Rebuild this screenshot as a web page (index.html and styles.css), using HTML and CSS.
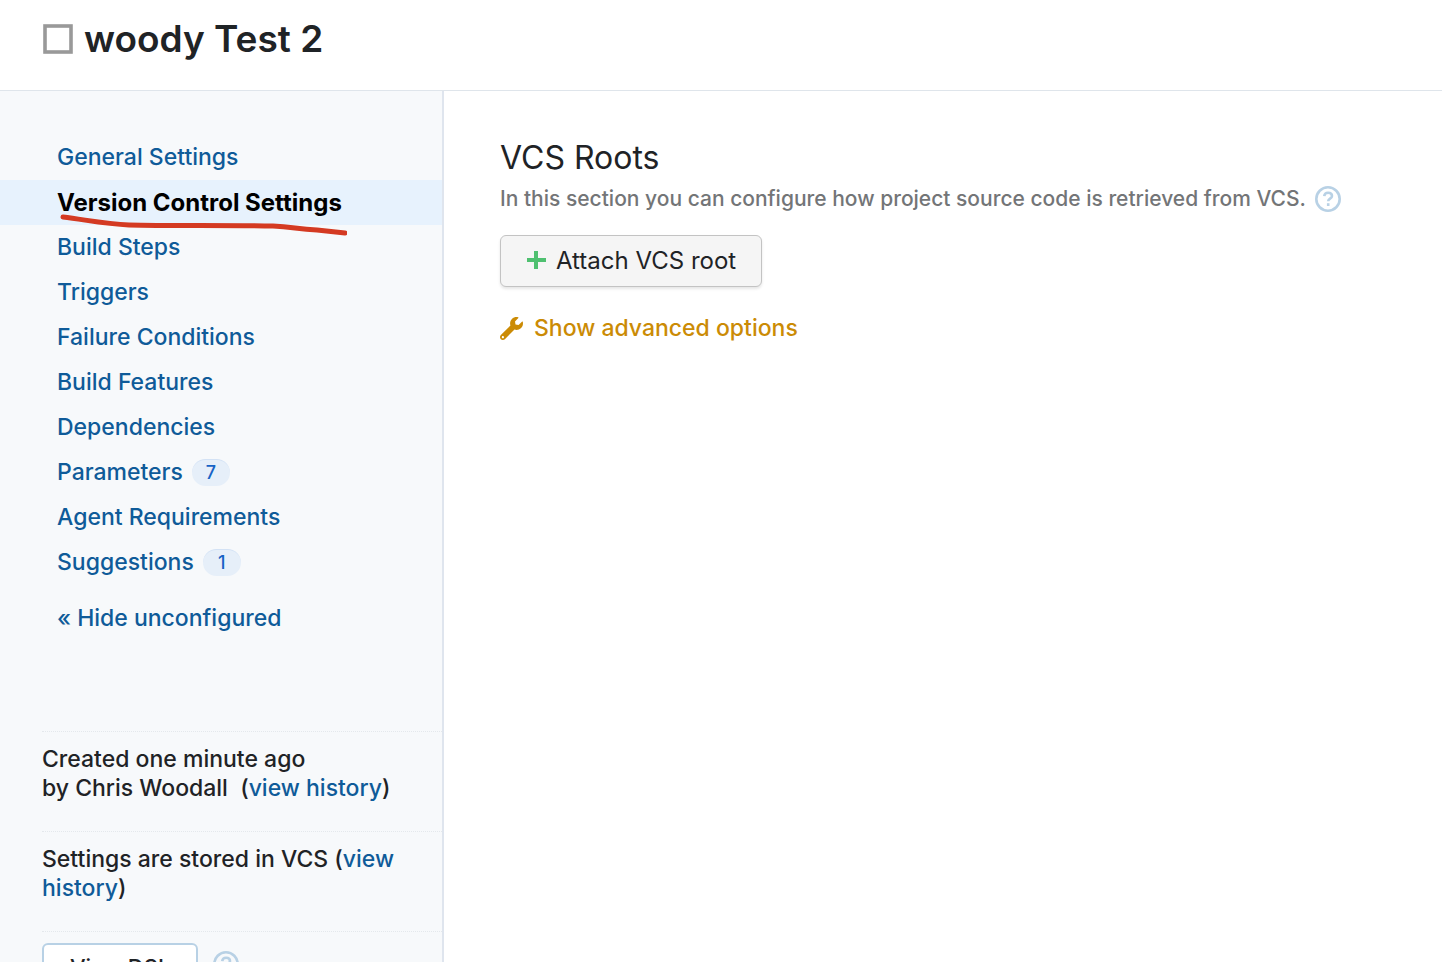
FILE: index.html
```
<!DOCTYPE html>
<html lang="en">
<head>
<meta charset="utf-8">
<title>woody Test 2</title>
<link rel="stylesheet" href="styles.css">
</head>
<body>
<div class="app">
  <header class="header">
    <svg class="type-icon" viewBox="0 0 30 30" aria-hidden="true"><rect x="2" y="2" width="26" height="26" fill="none" stroke="#999" stroke-width="3.6"/></svg>
    <h1 class="title">woody Test 2</h1>
  </header>
  <div class="columns">
    <aside class="sidebar">
      <nav class="nav">
        <a class="nav-item" href="#">General Settings</a>
        <a class="nav-item active" href="#">
          <span>Version Control Settings</span>
          <svg class="marker" viewBox="0 0 290 24" aria-hidden="true"><path d="M6 4C30 7 48 11 72 12C112 13 172 12 216 13C236 14 240 16 260 17L288 20" fill="none" stroke="#d43a22" stroke-width="5" stroke-linecap="round" stroke-linejoin="round"/></svg>
        </a>
        <a class="nav-item" href="#">Build Steps</a>
        <a class="nav-item" href="#">Triggers</a>
        <a class="nav-item" href="#">Failure Conditions</a>
        <a class="nav-item" href="#">Build Features</a>
        <a class="nav-item" href="#">Dependencies</a>
        <a class="nav-item" href="#"><span>Parameters</span><span class="badge">7</span></a>
        <a class="nav-item" href="#">Agent Requirements</a>
        <a class="nav-item" href="#"><span>Suggestions</span><span class="badge">1</span></a>
        <a class="nav-item toggle" href="#">« Hide unconfigured</a>
      </nav>
      <div class="details">
        <p class="detail">Created one minute ago<br>by Chris Woodall &nbsp;(<a href="#">view history</a>)</p>
        <p class="detail">Settings are stored in VCS (<a href="#">view history</a>)</p>
        <div class="actions">
          <button class="dsl-button" type="button">View DSL</button>
          <a class="help" href="#" aria-label="Help"><svg viewBox="0 0 26 26"><circle cx="13" cy="13" r="11.7"/><path d="M9.2 10.2C9.4 7.9 10.8 6.7 13.1 6.7C15.4 6.7 17 8 17 10C17 12.7 13.2 12.6 13.2 15.2"/><path d="M13.2 17.2V20"/></svg></a>
        </div>
      </div>
    </aside>
    <main class="content">
      <h2 class="section-title">VCS Roots</h2>
      <p class="note">
        <span>In this section you can configure how project source code is retrieved from VCS.</span>
        <a class="help" href="#" aria-label="Help"><svg viewBox="0 0 26 26"><circle cx="13" cy="13" r="11.7"/><path d="M9.2 10.2C9.4 7.9 10.8 6.7 13.1 6.7C15.4 6.7 17 8 17 10C17 12.7 13.2 12.6 13.2 15.2"/><path d="M13.2 17.2V20"/></svg></a>
      </p>
      <button class="attach-button" type="button">
        <svg class="plus" viewBox="0 0 20 20" aria-hidden="true"><path d="M10 0V18M1 9H20" stroke="#4fc070" stroke-width="4"/></svg>
        <span>Attach VCS root</span>
      </button>
      <a class="advanced" href="#">
        <svg class="wrench" viewBox="0 0 512 512" aria-hidden="true"><path fill="#cb8b05" d="M507.700 109.100c-2.200-9-13.500-12.100-20.100-5.500l-74.400 74.400-67.900-11.300L334 98.900l74.400-74.400c6.600-6.600 3.400-17.900-5.700-20.200-47.400-11.700-99.600.9-136.600 37.900-39.600 39.600-50.500 97.100-34.100 147.200L18.700 402.800c-25 25-25 65.500 0 90.500 25 25 65.500 25 90.500 0l213.200-213.200c50.100 16.700 107.500 5.700 147.400-34.200 37.100-37.100 49.700-89.300 37.900-136.800zM64 472c-13.200 0-24-10.800-24-24 0-13.300 10.700-24 24-24s24 10.700 24 24c0 13.200-10.700 24-24 24z"/></svg>
        <span>Show advanced options</span>
      </a>
    </main>
  </div>
</div>
</body>
</html>
```
FILE: styles.css
```
* {
  box-sizing: border-box;
}

body {
  margin: 0;
  background: #fff;
  color: #1f2326;
  font-family: Inter, "Liberation Sans", sans-serif;
  font-size: 23px;
  font-weight: 450;
  line-height: 29px;
}

a {
  color: #0f5b99;
  text-decoration: none;
}

h1, h2, p {
  margin: 0;
}

button {
  font: inherit;
  color: #1f2326;
}

.app {
  display: flex;
  flex-direction: column;
  height: 100vh;
  overflow: hidden;
}

.header {
  display: flex;
  align-items: center;
  gap: 11px;
  padding: 15px 43px 27px;
  border-bottom: 1px solid #dfe5eb;
}

.type-icon {
  width: 30px;
  height: 30px;
}

.title {
  font-size: 37px;
  font-weight: 600;
  line-height: 48px;
}

.columns {
  display: flex;
  flex: 1;
  min-height: 0;
}

.sidebar {
  flex: 0 0 444px;
  padding-top: 44px;
  overflow: hidden;
  border-right: 2px solid #dfe5ee;
  background: #f7f9fb;
}

.nav {
  display: flex;
  flex-direction: column;
}

.nav-item {
  position: relative;
  display: flex;
  align-items: center;
  gap: 9px;
  min-height: 45px;
  padding-left: 57px;
}

.active {
  background: #e7f2fd;
  color: #000;
  font-size: 24px;
  font-weight: 700;
}

.marker {
  position: absolute;
  z-index: 1;
  top: 33px;
  left: 57px;
  width: 290px;
  height: 24px;
}

.badge {
  min-width: 38px;
  border-top: 1px solid #d3e2f5;
  border-radius: 14px;
  background: #e6eff9;
  color: #1763c6;
  font-size: 18px;
  line-height: 26px;
  text-align: center;
}

.toggle {
  margin-top: 11px;
}

.details {
  margin-top: 90px;
  padding-left: 42px;
}

.detail {
  min-height: 100px;
  padding: 13px 32px 0 0;
  border-top: 1px dotted #e4e8ec;
}

.actions {
  display: flex;
  align-items: flex-start;
  gap: 15px;
  padding-top: 11px;
  border-top: 1px dotted #e4e8ec;
}

.dsl-button {
  padding: 8px 26px;
  border: 2px solid #b8d1e5;
  border-radius: 6px;
  background: #fff;
  font-size: 22px;
}

.help {
  display: block;
  width: 26px;
  height: 26px;
}

.actions .help {
  margin-top: 8px;
}

.help svg {
  display: block;
  fill: none;
  stroke: #b8d1e5;
  stroke-width: 2.6;
}

.content {
  display: flex;
  flex: 1;
  flex-direction: column;
  align-items: flex-start;
  min-width: 0;
  padding: 47px 56px;
}

.section-title {
  font-size: 32px;
  font-weight: 400;
  line-height: 40px;
}

.note {
  display: flex;
  align-items: center;
  gap: 9px;
  margin-top: 6px;
  color: #737577;
  font-size: 21px;
}

.attach-button {
  display: flex;
  align-items: center;
  gap: 10px;
  margin-top: 22px;
  padding: 11px 25px;
  border: 1px solid #c3c3c3;
  border-radius: 6px;
  background: #f5f5f5;
  box-shadow: 0 2px 3px #0000001a;
  font-size: 24px;
  font-weight: 400;
  line-height: 28px;
}

.plus {
  width: 20px;
  height: 20px;
}

.advanced {
  display: flex;
  align-items: center;
  gap: 11px;
  margin-top: 27px;
  color: #cb8b05;
  font-weight: 500;
}

.wrench {
  width: 23px;
  height: 23px;
}
```
